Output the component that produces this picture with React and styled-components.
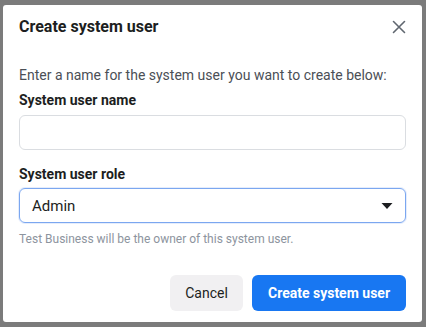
import React from "react";
import styled, { createGlobalStyle } from "styled-components";

const Global = createGlobalStyle`
  html, body { margin: 0; padding: 0; }
  body { background: #7b7b7b; font-family: Roboto, "Liberation Sans", Arial, sans-serif; }
  * { box-sizing: border-box; }
`;

const Backdrop = styled.div`
  width: 426px;
  height: 327px;
  padding: 5px 4px 5px 3px;
  display: flex;
`;

const Dialog = styled.div`
  flex: 1;
  background: #fff;
  border-radius: 3px;
  display: flex;
  flex-direction: column;
`;

const Header = styled.div`
  height: 43px;
  display: flex;
  align-items: center;
  justify-content: space-between;
  padding: 0 13px 0 16px;
`;

const Title = styled.h1`
  margin: 0;
  font-size: 16px;
  font-weight: 700;
  color: #1c1e21;
`;

const CloseBtn = styled.button`
  border: 0;
  background: transparent;
  padding: 0;
  width: 20px;
  height: 20px;
  display: flex;
  align-items: center;
  justify-content: center;
  cursor: pointer;
`;

const Body = styled.div`
  padding: 18px 16px 0 16px;
  display: flex;
  flex-direction: column;
`;

const Intro = styled.p`
  margin: 0;
  font-size: 14px;
  line-height: 18px;
  color: #4b4f56;
`;

const Label = styled.div`
  font-size: 14px;
  font-weight: 700;
  color: #1c1e21;
  line-height: 18px;
  margin-top: ${(p) => p.$mt}px;
`;

const Input = styled.input`
  margin-top: 6px;
  height: 35px;
  width: 100%;
  border: 1px solid #dadde1;
  border-radius: 6px;
  padding: 0 12px;
  font: inherit;
  font-size: 14px;
  outline: none;
`;

const Select = styled.div`
  margin-top: 5px;
  height: 35px;
  border: 1px solid #7ba7f0;
  border-radius: 6px;
  padding: 0 12px 0 12px;
  display: flex;
  align-items: center;
  justify-content: space-between;
  font-size: 15px;
  color: #1c1e21;
  box-shadow: 0 0 0 1px rgba(123, 167, 240, 0.2);
`;

const Help = styled.div`
  margin-top: 8px;
  font-size: 12px;
  line-height: 16px;
  color: #8d949e;
`;

const Footer = styled.div`
  margin-top: auto;
  padding: 0 16px 11px 16px;
  display: flex;
  justify-content: flex-end;
  gap: 9px;
`;

const Button = styled.button`
  height: 36px;
  border: 0;
  border-radius: 6px;
  padding: 0;
  font-family: inherit;
  font-size: 14px;
  font-weight: ${(p) => (p.$primary ? 700 : 400)};
  color: ${(p) => (p.$primary ? "#fff" : "#1c1e21")};
  background: ${(p) => (p.$primary ? "#1877f2" : "#f1f0f2")};
  width: ${(p) => (p.$primary ? 154 : 73)}px;
`;

export default function App() {
  return (
    <>
      <Global />
      <Backdrop>
        <Dialog>
          <Header>
            <Title>Create system user</Title>
            <CloseBtn aria-label="Close">
              <svg width="14" height="14" viewBox="0 0 14 14">
                <path d="M1.5 1.5 L12.5 12.5 M12.5 1.5 L1.5 12.5" stroke="#606770" strokeWidth="1.6" strokeLinecap="round" />
              </svg>
            </CloseBtn>
          </Header>
          <Body>
            <Intro>Enter a name for the system user you want to create below:</Intro>
            <Label $mt={7}>System user name</Label>
            <Input />
            <Label $mt={15}>System user role</Label>
            <Select>
              <span>Admin</span>
              <svg width="12" height="8" viewBox="0 0 12 8">
                <path d="M0.5 1 L11.5 1 L6 7 Z" fill="#1c1e21" />
              </svg>
            </Select>
            <Help>Test Business will be the owner of this system user.</Help>
          </Body>
          <Footer>
            <Button>Cancel</Button>
            <Button $primary>Create system user</Button>
          </Footer>
        </Dialog>
      </Backdrop>
    </>
  );
}
